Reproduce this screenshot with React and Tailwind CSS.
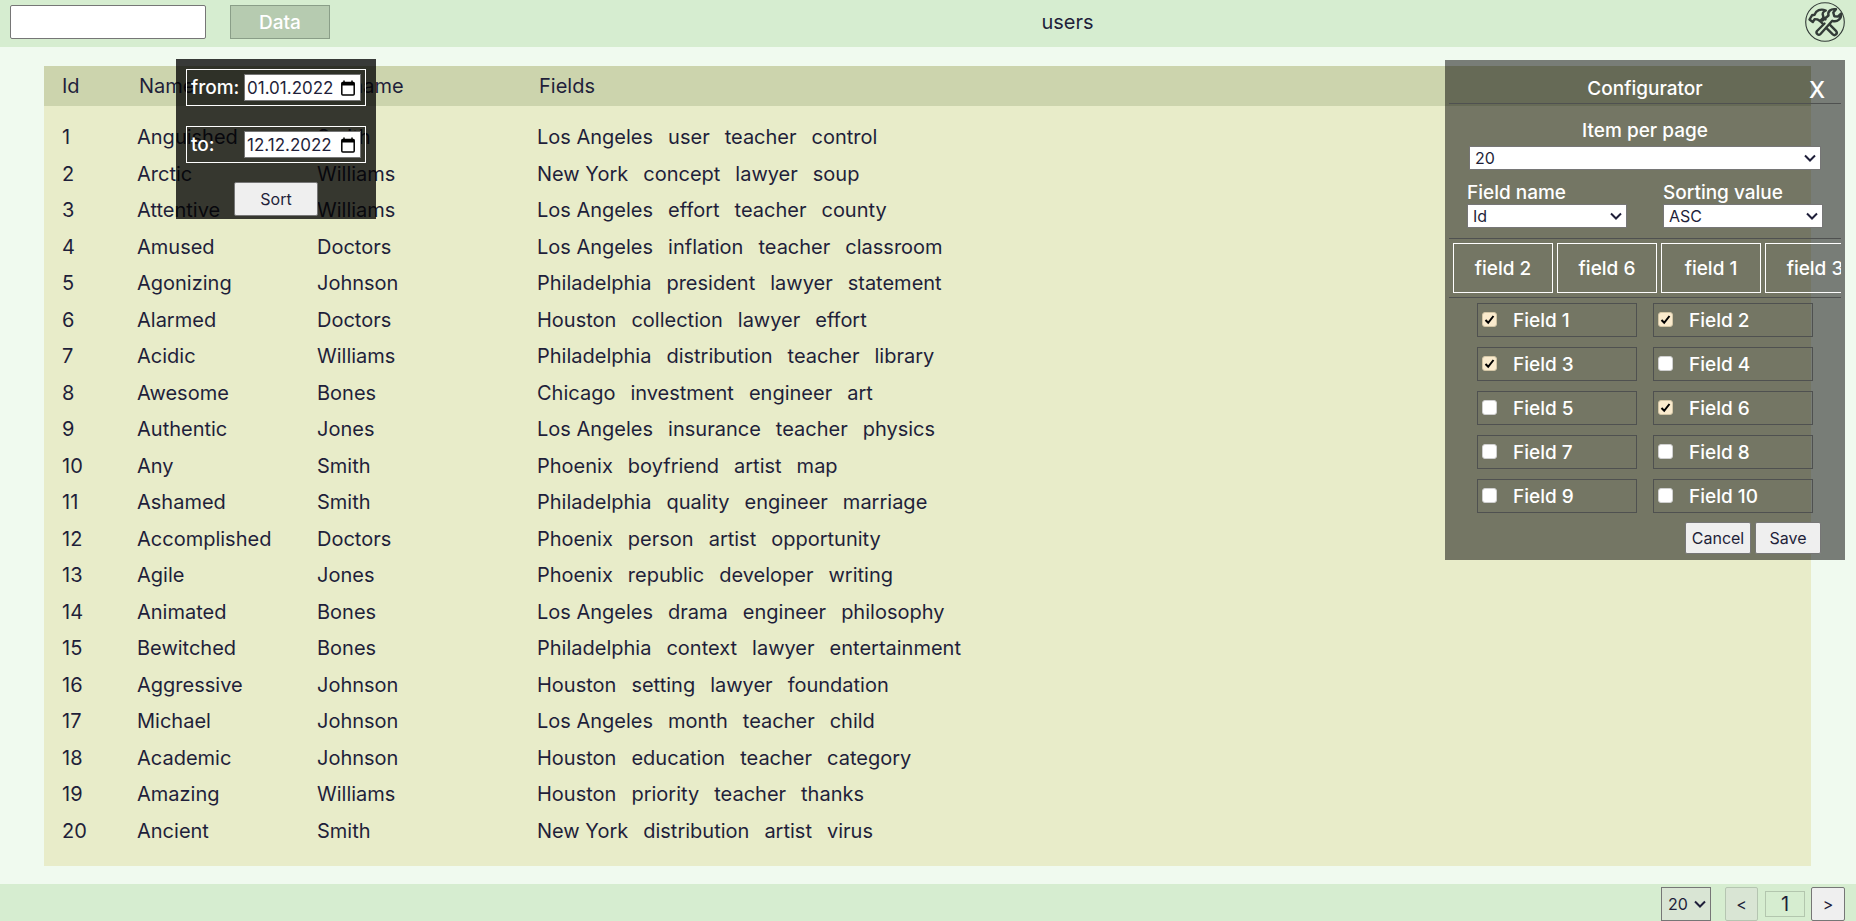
import { useState } from "react";

const users = [
  ["Anguished", "Smith", "Los Angeles", "user", "teacher", "control"],
  ["Arctic", "Williams", "New York", "concept", "lawyer", "soup"],
  ["Attentive", "Williams", "Los Angeles", "effort", "teacher", "county"],
  ["Amused", "Doctors", "Los Angeles", "inflation", "teacher", "classroom"],
  ["Agonizing", "Johnson", "Philadelphia", "president", "lawyer", "statement"],
  ["Alarmed", "Doctors", "Houston", "collection", "lawyer", "effort"],
  ["Acidic", "Williams", "Philadelphia", "distribution", "teacher", "library"],
  ["Awesome", "Bones", "Chicago", "investment", "engineer", "art"],
  ["Authentic", "Jones", "Los Angeles", "insurance", "teacher", "physics"],
  ["Any", "Smith", "Phoenix", "boyfriend", "artist", "map"],
  ["Ashamed", "Smith", "Philadelphia", "quality", "engineer", "marriage"],
  ["Accomplished", "Doctors", "Phoenix", "person", "artist", "opportunity"],
  ["Agile", "Jones", "Phoenix", "republic", "developer", "writing"],
  ["Animated", "Bones", "Los Angeles", "drama", "engineer", "philosophy"],
  ["Bewitched", "Bones", "Philadelphia", "context", "lawyer", "entertainment"],
  ["Aggressive", "Johnson", "Houston", "setting", "lawyer", "foundation"],
  ["Michael", "Johnson", "Los Angeles", "month", "teacher", "child"],
  ["Academic", "Johnson", "Houston", "education", "teacher", "category"],
  ["Amazing", "Williams", "Houston", "priority", "teacher", "thanks"],
  ["Ancient", "Smith", "New York", "distribution", "artist", "virus"],
];

const chips = ["field 2", "field 6", "field 1", "field 3"];

function ToolsIcon() {
  return (
    <svg viewBox="0 0 40 40" className="size-10" fill="none" stroke="#333b38" strokeLinejoin="round" strokeLinecap="round" aria-hidden="true">
      <circle cx="20" cy="20" r="19.3" strokeWidth="1.1" />
      <g strokeWidth="2.4">
        <path d="M17.5 18.5 23.500 13.500C22.300 9.500 26 6.300 31 7.300L28.300 10.600 29.300 14.200 32.800 14.600 36 11.600C37 16.500 32.500 20.500 27.300 18.800L15.500 32C13.500 34 10.300 31.500 12 29L19.500 21.500" />
        <path d="M4.500 17.500 7 13.300 9.500 12.800C11 8.500 15.500 6.300 20.800 8.500 18 9.800 17 11.500 18 13.600L18.500 15.500 15 19 12.600 17.400 9.500 17.300 7.800 20Z" />
        <path d="M15 19 18 22M18.500 15.500 20.500 17.500M25 22.800 31.200 29.200C33 31.500 30 34.400 27.800 32.400L21.200 25.800" />
      </g>
    </svg>
  );
}

function Chevron({ className }) {
  return (
    <svg viewBox="0 0 12 8" className={"pointer-events-none absolute top-1/2 h-2 w-3 -translate-y-1/2 " + className} fill="none" stroke="#1f1f3a" strokeWidth="2" aria-hidden="true">
      <path d="M1 1.500 6 6.500 11 1.500" />
    </svg>
  );
}

function Select({ id, value, options, className }) {
  return (
    <div className="relative">
      <select
        id={id}
        defaultValue={value}
        className={"block w-full appearance-none border border-[#767676] bg-white px-[5px] text-base leading-5 outline-none " + className}
      >
        {options.map((o) => (
          <option key={o}>{o}</option>
        ))}
      </select>
      <Chevron className="right-[5px]" />
    </div>
  );
}

function DateField({ id, label, value }) {
  return (
    <div className="flex h-[37px] items-center justify-between border border-white px-1 text-white">
      <label htmlFor={id} className="text-[19px] font-medium">{label}</label>
      <div className="relative">
        <input
          id={id}
          defaultValue={value}
          className="block h-[27px] w-[117px] border border-[#767676] bg-white pl-0.5 text-[17px] text-[#1f1f3a] outline-none"
        />
        <svg viewBox="0 0 14 16" className="pointer-events-none absolute right-1.5 top-1/2 h-4 w-3.5 -translate-y-1/2" fill="none" stroke="#000" strokeWidth="1.500" aria-hidden="true">
          <rect x="0.800" y="2.500" width="12.400" height="12.400" rx="1" />
          <path d="M0.800 4H13.200" strokeWidth="3" />
          <path d="M3 0.500V3M11 0.500V3" />
        </svg>
      </div>
    </div>
  );
}

function DatePopup() {
  return (
    <form className="absolute left-44 top-[59px] flex w-[200px] flex-col items-center bg-black/77 px-2.5 pt-2.5 pb-[3px]">
      <div className="flex w-full flex-col gap-5">
        <DateField id="from" label="from:" value="01.01.2022" />
        <DateField id="to" label="to:" value="12.12.2022" />
      </div>
      <button type="button" className="mt-[19px] h-[34px] w-[84px] rounded-xs border border-[#767676] bg-[#efefef] text-base">
        Sort
      </button>
    </form>
  );
}

function FieldToggle({ n, checked, onChange }) {
  return (
    <label className="flex h-[34px] items-center border border-[#4f5150] px-1">
      <span className="relative mb-0.5 block size-[15px]">
        <input
          type="checkbox"
          checked={checked}
          onChange={onChange}
          className="block size-[15px] appearance-none rounded-[3px] border border-[#cfcfcf] bg-white checked:border-[#d3c6a6] checked:bg-[#faebcd]"
        />
        {checked && (
          <svg viewBox="0 0 15 15" className="pointer-events-none absolute inset-0 size-[15px]" fill="none" stroke="#000" strokeWidth="2" aria-hidden="true">
            <path d="M3.500 8 6.200 10.800 11.500 4" />
          </svg>
        )}
      </span>
      <span className="ml-4 pt-0.5">Field {n}</span>
    </label>
  );
}

function Configurator() {
  const [active, setActive] = useState([1, 2, 3, 6]);
  const toggle = (n) => setActive((a) => (a.includes(n) ? a.filter((x) => x !== n) : [...a, n]));
  return (
    <section className="absolute right-[11px] top-[60px] w-[400px] bg-black/50 px-1 pb-1.5 text-[19px] leading-6 font-medium text-white">
      <div className="relative h-11 border-b border-[#4f5150] pt-[17px] text-center">
        <h2>Configurator</h2>
        <button type="button" aria-label="Close" className="absolute right-4 top-4 text-[23px] leading-7">X</button>
      </div>
      <div className="px-5 pt-[15px] text-center">
        <label htmlFor="per-page" className="mb-[3px] block">Item per page</label>
        <Select id="per-page" value="20" options={["10", "20", "50"]} className="h-6 font-normal text-[#1f1f3a]" />
      </div>
      <div className="flex justify-between px-[18px] pt-3 pb-2.5">
        <div className="w-40">
          <label htmlFor="field-name" className="block leading-[22px]">Field name</label>
          <Select id="field-name" value="Id" options={["Id", "Name", "Surname"]} className="h-6 font-normal text-[#1f1f3a]" />
        </div>
        <div className="w-40">
          <label htmlFor="sorting" className="block leading-[22px]">Sorting value</label>
          <Select id="sorting" value="ASC" options={["ASC", "DESC"]} className="h-6 font-normal text-[#1f1f3a]" />
        </div>
      </div>
      <div className="flex gap-1 overflow-hidden border-y border-[#4f5150] p-1">
        {chips.map((c) => (
          <div key={c} className="flex h-[50px] w-[100px] shrink-0 items-center justify-center border border-white pt-0.5">{c}</div>
        ))}
      </div>
      <div className="grid grid-cols-2 gap-x-4 gap-y-2.5 px-7 pt-[5px]">
        {[1, 2, 3, 4, 5, 6, 7, 8, 9, 10].map((n) => (
          <FieldToggle key={n} n={n} checked={active.includes(n)} onChange={() => toggle(n)} />
        ))}
      </div>
      <div className="mt-[9px] flex justify-end gap-1 px-5 text-base font-normal text-[#1f1f3a]">
        <button type="button" className="h-8 w-[66px] rounded-xs border border-[#767676] bg-[#efefef]">Cancel</button>
        <button type="button" className="h-8 w-[66px] rounded-xs border border-[#767676] bg-[#efefef]">Save</button>
      </div>
    </section>
  );
}

export default function App() {
  return (
    <div className="relative flex min-h-screen flex-col bg-[#f0faef] font-['Inter','Roboto',sans-serif] text-[20px] leading-6 text-[#1f1f3a]">
      <header className="flex h-[47px] items-start bg-[#d6edd0] pl-2.5 pr-[11px]">
        <input aria-label="Search" className="mt-[5px] h-[34px] w-[196px] rounded-xs border border-[#767676] bg-white px-2 outline-none" />
        <button type="button" className="ml-6 mt-[5px] h-[34px] w-[100px] border border-[#8a9e88] bg-[#b6cbb0] pt-0.5 text-[19px] font-medium text-white">Data</button>
        <h1 className="mt-2.5 flex-1 text-center">users</h1>
        <button type="button" aria-label="Settings" className="mt-0.5">
          <ToolsIcon />
        </button>
      </header>

      <main className="flex flex-1 flex-col pl-11 pr-[45px] pt-[19px] pb-[18px]">
        <table className="flex flex-1 flex-col bg-[#e8ecc9]">
          <thead className="block bg-[#ccd4ad]">
            <tr className="flex h-10 items-center pl-[18px] text-left">
              <th className="w-[77px] font-normal">Id</th>
              <th className="w-[180px] font-normal">Name</th>
              <th className="w-[220px] font-normal">Surname</th>
              <th className="flex-1 font-normal">Fields</th>
            </tr>
          </thead>
          <tbody className="flex flex-1 flex-col pt-[13px] pb-[17px] pl-[18px]">
            {users.map(([name, surname, ...fields], i) => (
              <tr key={i} className="flex flex-1 items-center">
                <td className="w-[75px]">{i + 1}</td>
                <td className="w-[180px]">{name}</td>
                <td className="w-[220px]">{surname}</td>
                <td className="flex flex-1 gap-[15px]">
                  {fields.map((f) => (
                    <span key={f}>{f}</span>
                  ))}
                </td>
              </tr>
            ))}
          </tbody>
        </table>
      </main>

      <footer className="flex h-[37px] items-center justify-end bg-[#d6edd0] pr-[11px] pt-[3px]">
        <div className="relative mr-3.5">
          <select aria-label="Items per page" defaultValue="20" className="block h-[34px] w-[50px] appearance-none border border-[#767676] bg-[#d9e5d4] pl-1.5 text-base outline-none">
            <option>10</option>
            <option>20</option>
            <option>50</option>
          </select>
          <Chevron className="right-[5px]" />
        </div>
        <button type="button" className="h-[34px] w-[33px] rounded-xs border border-[#b5c5b1] bg-[#d9e5d4] text-base">&lt;</button>
        <span className="ml-[7px] mr-1.5 flex h-[26px] w-10 items-center justify-center border border-[#b3c6ae]">1</span>
        <button type="button" className="h-[34px] w-[34px] rounded-xs border border-[#767676] bg-[#efefef] text-base">&gt;</button>
      </footer>

      <DatePopup />
      <Configurator />
    </div>
  );
}
